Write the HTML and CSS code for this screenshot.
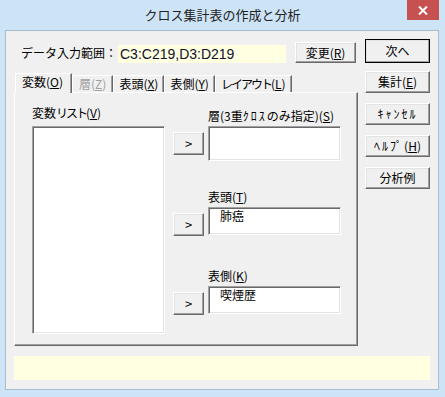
FILE: index.html
```html
<!DOCTYPE html>
<html lang="ja">
  <head>
    <meta charset="UTF-8" />
    <title>クロス集計表の作成と分析</title>
    <link rel="stylesheet" href="styles.css">
  </head>
  <body>
    <div class="window">
      <div class="titlebar">
        <span class="title">クロス集計表の作成と分析</span>
        <div class="close">
          <svg width="10" height="9" viewBox="0 0 10 9">
            <path d="M1 0.5 L9 8.5 M9 0.5 L1 8.5" stroke="#fff" stroke-width="2" />
          </svg>
        </div>
      </div>

      <div class="client">
        <div class="main">
          <div class="range-row">
            <span class="range-label">データ入力範囲：</span>
            <span class="range-field">C3:C219,D3:D219</span>
            <button class="btn btn-change">変更(<u>R</u>)</button>
          </div>

          <div class="tabs">
            <div class="tab active">変数(<u>O</u>)</div>
            <div class="tab disabled">層(<u>Z</u>)</div>
            <div class="tab">表頭(<u>X</u>)</div>
            <div class="tab">表側(<u>Y</u>)</div>
            <div class="tab"><span class="narrow">レイアウト</span>(<u>L</u>)</div>
          </div>

          <div class="panel">
            <div class="var-col">
              <div class="label">変数<span class="narrow">リスト</span>(<u>V</u>)</div>
              <div class="listbox"></div>
            </div>

            <div class="fields">
              <div class="field field-layer">
                <div class="label">層(3重<span class="kana">ｸﾛｽ</span>のみ指定)(<u>S</u>)</div>
                <button class="btn btn-arrow">&gt;</button>
                <div class="textbox"></div>
              </div>
              <div class="field field-head">
                <div class="label">表頭(<u>T</u>)</div>
                <button class="btn btn-arrow">&gt;</button>
                <div class="textbox">肺癌</div>
              </div>
              <div class="field field-side">
                <div class="label">表側(<u>K</u>)</div>
                <button class="btn btn-arrow">&gt;</button>
                <div class="textbox">喫煙歴</div>
              </div>
            </div>
          </div>
        </div>

        <div class="side">
          <button class="btn btn-default">次へ</button>
          <button class="btn btn-side">集計(<u>E</u>)</button>
          <button class="btn btn-side"><span class="kana">ｷｬﾝｾﾙ</span></button>
          <button class="btn btn-side"><span class="kana">ﾍﾙﾌﾟ</span>(<u>H</u>)</button>
          <button class="btn btn-side">分析例</button>
        </div>

        <div class="status"></div>
      </div>
    </div>
  </body>
</html>
```

FILE: styles.css
```css
body {
  margin: 0;
  font-family: "Noto Sans CJK JP", "Liberation Sans", sans-serif;
  font-size: 12px;
  color: #000;
  background: #cde4f7;
}

.window {
  width: 445px;
  height: 397px;
  background: #cde4f7;
  box-sizing: border-box;
  padding: 0 6px 0 5px;
}

.titlebar {
  height: 30px;
  display: grid;
  grid-template-columns: 32px 1fr 32px;
  margin: 0 0 0 1px;
}

.title {
  grid-column: 2;
  text-align: center;
  font-size: 13px;
  line-height: 30px;
  color: #222;
}

.close {
  grid-column: 3;
  margin-right: -1px;
  width: 32px;
  height: 20px;
  background: #c75050;
  display: flex;
  align-items: center;
  justify-content: center;
}

.client {
  height: 360px;
  box-sizing: border-box;
  border: 1px solid #a6bdd4;
  background: #f0f0f0;
  padding: 8px;
  display: grid;
  grid-template-columns: 344px 65px;
  grid-template-rows: 307px 24px;
  column-gap: 7px;
  row-gap: 10px;
}

u {
  text-decoration: underline;
  text-underline-offset: 1px;
}

/* kana are proportional (narrower) in the original UI font */
.narrow {
  letter-spacing: -2px;
}

/* half-width kana are drawn wider in the original font */
.kana {
  letter-spacing: 2px;
}

/* buttons */
.btn {
  font-family: inherit;
  font-size: 12px;
  color: #000;
  background: #f0f0f0;
  border: 1px solid;
  border-color: #fff #696969 #696969 #fff;
  box-shadow: inset -1px -1px #a0a0a0, inset 1px 1px #e3e3e3;
  padding: 0;
  line-height: 1;
}

/* top row */
.range-row {
  height: 36px;
  display: flex;
  align-items: flex-start;
  padding-left: 7px;
}

.range-label {
  width: 97px;
  margin-top: 7px;
  line-height: 14px;
}

.range-field {
  width: 168px;
  height: 18px;
  margin-top: 6px;
  padding-left: 2px;
  box-sizing: border-box;
  background: #ffffe1;
  font-family: "Liberation Sans", sans-serif;
  font-size: 14px;
  line-height: 18px;
  color: #101030;
}

.btn-change {
  width: 61px;
  height: 21px;
  margin: 3px 0 0 9px;
}

/* tabs */
.tabs {
  height: 17px;
  display: flex;
  align-items: flex-end;
  padding-left: 1px;
  position: relative;
  z-index: 1;
}

.tab {
  height: 16px;
  line-height: 16px;
  padding: 0 5px;
  border-top: 1px solid #fff;
  border-left: 1px solid #fff;
  border-right: 1px solid #696969;
  box-shadow: inset -1px 0 #a0a0a0;
}

.tab.active {
  height: 19px;
  margin-bottom: -1px;
  padding: 0 8px 0 6px;
  background: #f0f0f0;
}

.tab.disabled {
  color: #a0a0a0;
  padding: 0 6px;
}

/* panel */
.panel {
  height: 254px;
  box-sizing: border-box;
  border-top: 1px solid #fff;
  border-left: 1px solid #fff;
  border-right: 1px solid #696969;
  border-bottom: 1px solid #696969;
  box-shadow: inset -1px -1px #a0a0a0;
  display: flex;
  padding-left: 17px;
}

.label {
  height: 16px;
  line-height: 16px;
  white-space: nowrap;
}

.var-col .label {
  margin-top: 12px;
  margin-bottom: 5px;
}

.listbox {
  width: 133px;
  height: 208px;
  box-sizing: border-box;
  background: #fff;
  border: 1px solid;
  border-color: #a0a0a0 #fff #fff #a0a0a0;
  box-shadow: inset 1px 1px #696969, inset -1px -1px #e3e3e3;
}

.fields {
  margin-left: 8px;
}

.field {
  display: grid;
  grid-template-columns: 31px 133px;
  column-gap: 4px;
}

.field .label {
  grid-column: 2;
  margin-bottom: 2px;
}

.field-layer {
  margin-top: 15px;
}

.field-head {
  margin-top: 28px;
}

.field-side {
  margin-top: 33px;
}

.btn-arrow {
  grid-column: 1;
  height: 23px;
  align-self: center;
  font-size: 13px;
}

.field-head .btn-arrow,
.field-side .btn-arrow {
  align-self: end;
  margin-bottom: -1px;
}

.textbox {
  grid-column: 2;
  height: 35px;
  box-sizing: border-box;
  background: #fff;
  border: 1px solid;
  border-color: #a0a0a0 #fff #fff #a0a0a0;
  box-shadow: inset 1px 1px #696969, inset -1px -1px #e3e3e3;
  padding: 0 0 0 11px;
  line-height: 16px;
}

.field-head .textbox,
.field-side .textbox {
  height: 28px;
}

/* side buttons */
.side {
  display: flex;
  flex-direction: column;
}

.btn-default {
  height: 24px;
  outline: 1px solid #000;
  outline-offset: -1px;
  border-color: #fff #696969 #696969 #fff;
}

.btn-side {
  height: 22px;
  margin-top: 10px;
}

.btn-default + .btn-side {
  margin-top: 8px;
}

.status {
  grid-column: 1 / 3;
  background: #ffffe1;
}
```
